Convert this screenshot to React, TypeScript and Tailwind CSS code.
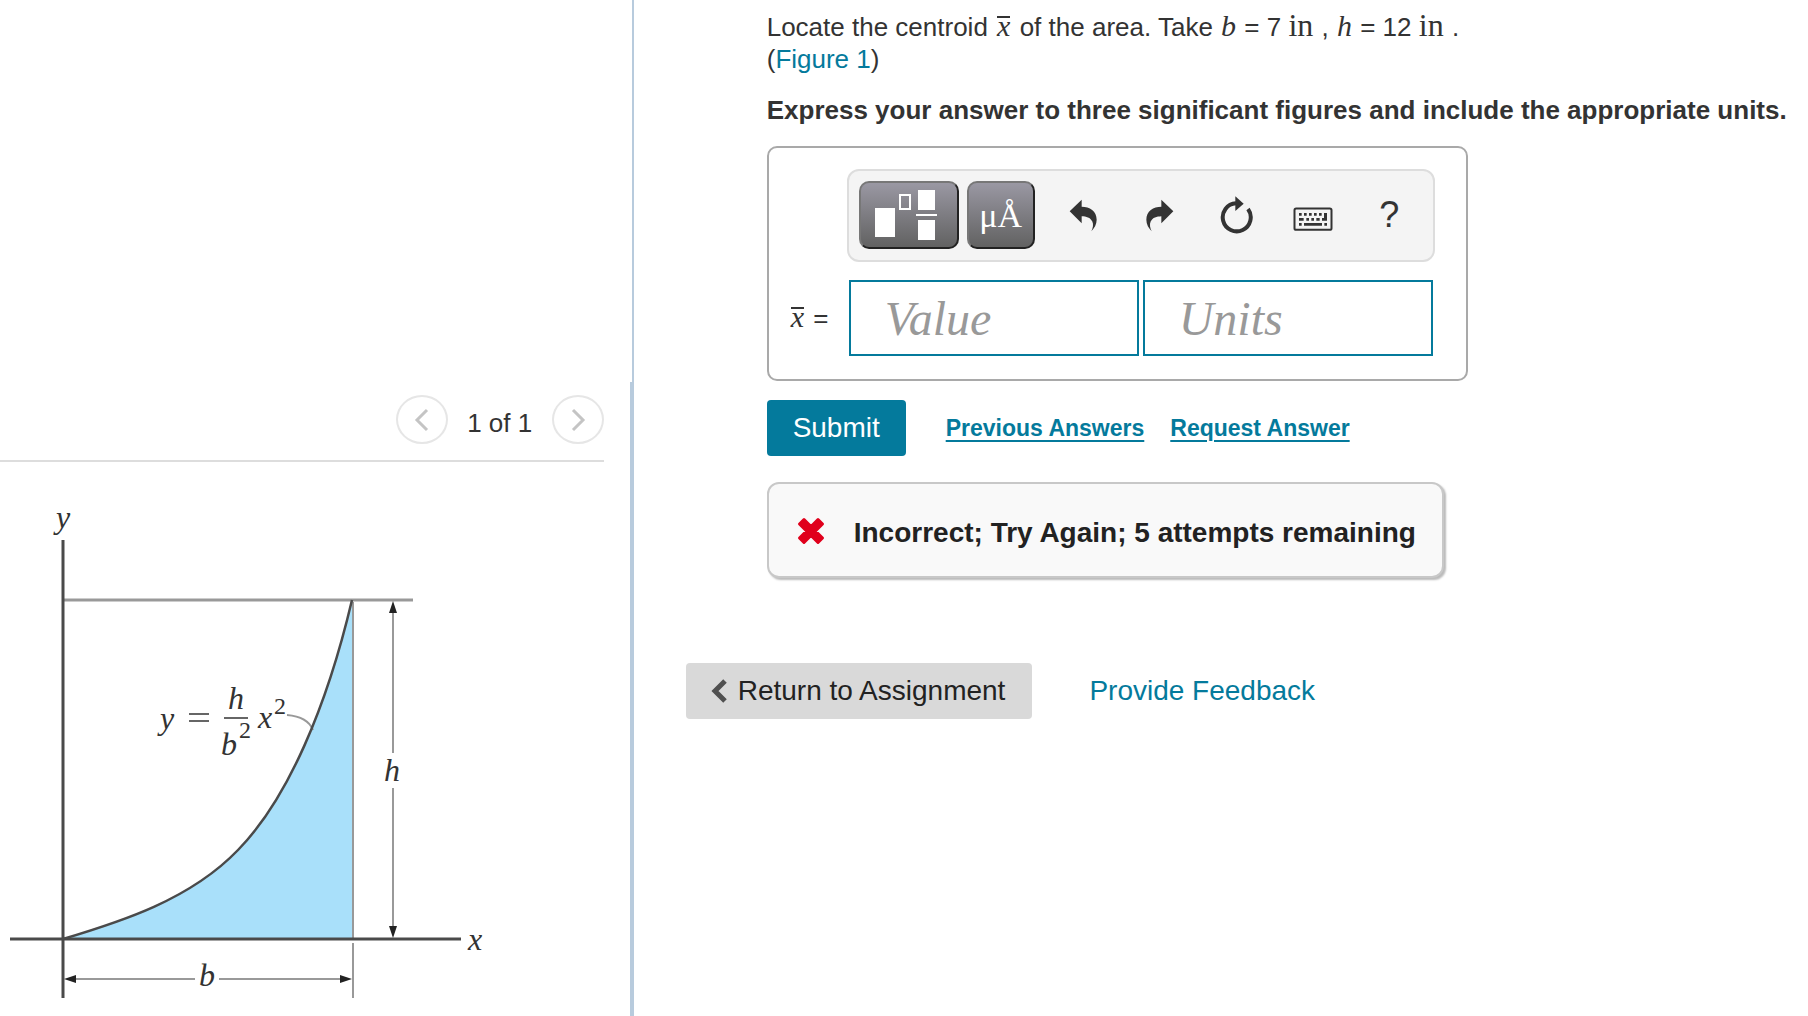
import { useState } from "react";
import type { ReactNode } from "react";

function MathVar({ children, bar }: { children: ReactNode; bar?: boolean }) {
  return (
    <i
      className={`font-['Liberation_Serif',serif] text-[30px] ${
        bar
          ? "mx-[2px] inline-block border-t-2 border-[#333] leading-4"
          : "mx-px leading-6"
      }`}
    >
      {children}
    </i>
  );
}

function Unit({ children }: { children: ReactNode }) {
  return (
    <span className="mr-px font-['Liberation_Serif',serif] text-[32px] leading-6">
      {children}
    </span>
  );
}

function TemplatesIcon() {
  return (
    <svg className="mr-[6px] h-[50px] w-[62px]" viewBox="0 0 62 50" fill="#fff">
      <rect x="0" y="18" width="20" height="29" />
      <path d="M25 5h10v14h-10z" fill="none" stroke="#fff" strokeWidth="2" />
      <rect x="43" y="0" width="17" height="20" />
      <rect x="41" y="24" width="21" height="2" />
      <rect x="43" y="30" width="17" height="20" />
    </svg>
  );
}

function UndoIcon({ className = "" }: { className?: string }) {
  return (
    <svg className={`h-[33px] w-7 ${className}`} viewBox="88 176 84 98" fill="#333">
      <path d="M90 212 126 178V199C150 199 171 212 171 238C171 252 164 264 155 272C160 262 162 252 158 243C152 230 140 228 126 227V248Z" />
    </svg>
  );
}

function ResetIcon() {
  return (
    <svg className="mr-[2px] h-[38px] w-[34px]" viewBox="540 168 102 114">
      <path
        d="M627 207A42 42 0 1 1 591 190"
        fill="none"
        stroke="#333"
        strokeWidth="12"
      />
      <path d="M589 169 614 191 589 213Z" fill="#333" />
    </svg>
  );
}

function KeyboardIcon() {
  return (
    <svg className="mr-[2px] h-6 w-10" viewBox="759 203 120 72">
      <rect x="763.500" y="207.500" width="111" height="64" rx="5" fill="none" stroke="#333" strokeWidth="6" />
      <path
        d="M777 221h8v8h-8zM792 221h8v8h-8zM807 221h8v8h-8zM822 221h8v8h-8zM837 221h8v8h-8zM852 221h9v23h-15v-8h6zM777 236h14v8h-14zM799 236h8v8h-8zM814 236h8v8h-8zM829 236h10v8h-10zM777 251h8v8h-8zM792 251h54v8h-54zM853 251h8v8h-8z"
        fill="#333"
      />
    </svg>
  );
}

function Chevron({ className = "" }: { className?: string }) {
  return (
    <svg className={`h-6 w-4 ${className}`} viewBox="0 0 16 24">
      <path d="M13 2 3 12l10 10" fill="none" stroke="currentColor" strokeWidth="3" />
    </svg>
  );
}

function Figure() {
  return (
    <svg
      className="block w-[500px] max-w-full"
      viewBox="0 490 500 520"
      role="img"
      aria-label="Area under y = (h/b²)x²"
    >
      <path
        d="M63 939C120 922 190 900 238 850C288 799 327 706 352 600V939Z"
        fill="#a9e0fa"
      />
      <g fill="none" stroke="#999" strokeWidth="3">
        <path d="M63 600H413" />
        <path d="M353 602V938M353 943V998" strokeWidth="2" />
        <path d="M393 606V753M393 788V932M70 979H195M219 979H346" strokeWidth="2" />
        <path d="M287 715C299 716 309 720 313 730" strokeWidth="2" />
      </g>
      <g fill="none" stroke="#4a4a4a" strokeWidth="3">
        <path d="M63 540V998M10 939H461" />
        <path d="M63 939C120 922 190 900 238 850C288 799 327 706 352 600" strokeWidth="2.500" />
      </g>
      <path
        d="M393 601l4 12h-8zM393 938l4-12h-8zM64 979l12-4v8zM352 979l-12-4v8z"
        fill="#222"
      />
      <g
        className="font-['Liberation_Serif',serif]"
        fontSize="32"
        fontStyle="italic"
        fill="#333"
      >
        <text x="56" y="528">y</text>
        <text x="384" y="781">h</text>
        <text x="199" y="986">b</text>
        <text x="468" y="950">x</text>
        <text x="160" y="729">y</text>
        <text x="228" y="709">h</text>
        <text x="221" y="755">b</text>
        <text x="258" y="728">x</text>
        <g fontStyle="normal" fontSize="24">
          <text x="239" y="738">2</text>
          <text x="274" y="714">2</text>
        </g>
      </g>
      <path d="M189 714h20M189 721h20M224 718h24" stroke="#666" strokeWidth="2" />
    </svg>
  );
}

const pagerButton =
  "flex h-[49px] w-[52px] items-center justify-center rounded-[50%] border-2 border-[#e6e6e6] text-[#c4c4c4]";
const paletteButton =
  "flex h-[68px] items-center justify-center rounded-[10px] border-2 border-t-[#777] border-l-[#777] border-r-[#222] border-b-[#222] bg-linear-to-b from-[#9a98a3] to-[#626262] text-white";
const toolButton = "flex h-[68px] w-[77px] items-center justify-center text-[#333]";
const answerInput =
  "h-[76px] w-[290px] border-2 border-[#047a9c] pl-[34px] font-['Liberation_Serif',serif] text-[48px] outline-none placeholder:italic placeholder:text-[#999]";

export default function App() {
  const [value, setValue] = useState("");
  const [units, setUnits] = useState("");

  return (
    <div className="flex min-h-screen bg-white font-['Liberation_Sans',Arial,sans-serif] text-[26px] text-[#333]">
      <aside className="flex w-[35.05%] shrink-0 flex-col">
        <div className="h-[382px] border-r-2 border-[#b8cbdd]" />
        <div className="flex-1 border-r-4 border-[#b8cbdd]">
          <div className="mr-[26px] flex items-start justify-end border-b-2 border-[#ddd] pt-[13px] pb-4">
            <button className={pagerButton} aria-label="Previous figure">
              <Chevron />
            </button>
            <span className="w-[104px] pt-3 text-center leading-8">1 of 1</span>
            <button className={pagerButton} aria-label="Next figure">
              <Chevron className="rotate-180" />
            </button>
          </div>
          <div className="pt-7">
            <Figure />
          </div>
        </div>
      </aside>

      <main className="min-w-0 flex-1 pt-[11px]">
        <div className="pl-[133px]">
          <p className="leading-8">
            Locate the centroid <MathVar bar>x</MathVar> of the area. Take{" "}
            <MathVar>b</MathVar> = 7 <Unit>in</Unit> , <MathVar>h</MathVar> = 12{" "}
            <Unit>in</Unit> .
            <br />
            (
            <a href="#figure" className="text-[#047a9c]">
              Figure 1
            </a>
            )
          </p>
          <p className="mt-[19px] leading-8 font-bold">
            Express your answer to three significant figures and include the
            appropriate units.
          </p>

          <form onSubmit={(e) => e.preventDefault()}>
            <div className="mt-5 w-fit rounded-[10px] border-2 border-[#a9a9a9] pt-[21px] pr-[31px] pb-[23px] pl-5">
              <div className="ml-[58px] flex items-center rounded-xl border-2 border-[#ddd] bg-[#f4f4f4] pt-[10px] pr-[3px] pb-[11px] pl-[10px]">
                <button type="button" className={`${paletteButton} w-[100px]`} aria-label="Templates">
                  <TemplatesIcon />
                </button>
                <button
                  type="button"
                  className={`${paletteButton} mr-[10px] ml-2 w-[68px] font-['Liberation_Serif',serif] text-[34px]`}
                >
                  μÅ
                </button>
                <button type="button" className={toolButton} aria-label="Undo">
                  <UndoIcon />
                </button>
                <button type="button" className={toolButton} aria-label="Redo">
                  <UndoIcon className="-scale-x-100" />
                </button>
                <button type="button" className={toolButton} aria-label="Reset">
                  <ResetIcon />
                </button>
                <button type="button" className={`${toolButton} pt-2`} aria-label="Keyboard shortcuts">
                  <KeyboardIcon />
                </button>
                <button type="button" className={`${toolButton} pr-1 text-[36px]`}>
                  ?
                </button>
              </div>
              <div className="mt-[18px] flex items-center gap-1">
                <label htmlFor="value" className="w-14">
                  <MathVar bar>x</MathVar> =
                </label>
                <input
                  id="value"
                  className={answerInput}
                  placeholder="Value"
                  value={value}
                  onChange={(e) => setValue(e.target.value)}
                />
                <input
                  aria-label="Units"
                  className={answerInput}
                  placeholder="Units"
                  value={units}
                  onChange={(e) => setUnits(e.target.value)}
                />
              </div>
            </div>

            <div className="mt-[19px] flex items-center text-[23px] font-bold text-[#047a9c]">
              <button className="h-14 w-[139px] rounded-[4px] bg-[#047a9c] text-[28px] font-normal text-white">
                Submit
              </button>
              <a href="#previous" className="ml-10 underline decoration-2 underline-offset-4">
                Previous Answers
              </a>
              <a href="#request" className="ml-[26px] underline decoration-2 underline-offset-4">
                Request Answer
              </a>
            </div>
          </form>

          <div className="mt-[26px] flex h-[96px] w-fit items-center rounded-xl border-2 border-[#c8c8c8] bg-[#f9f9f9] pt-[6px] pr-[26px] pl-7 shadow-[2px_2px_2px_#bbb]">
            <svg className="mr-[29px] mb-1 h-7 w-7" viewBox="0 0 28 28">
              <path
                d="M7 2.500 14 9.500 21 2.500 25.500 7 18.500 14 25.500 21 21 25.500 14 18.500 7 25.500 2.500 21 9.500 14 2.500 7Z"
                fill="#e0001c"
                stroke="#e0001c"
                strokeWidth="3"
                strokeLinejoin="round"
              />
            </svg>
            <strong className="text-[28px] text-[#222]">
              Incorrect; Try Again; 5 attempts remaining
            </strong>
          </div>
        </div>

        <div className="mt-[85px] flex items-center pl-[52px] text-[28px]">
          <a
            href="#assignment"
            className="flex h-14 items-center rounded-[4px] bg-[#d9d9d9] pr-[27px] pl-6 text-[#222]"
          >
            <svg className="mr-[10px] h-[26px] w-[18px]" viewBox="0 0 18 26">
              <path
                d="M15 3 5 13l10 10"
                fill="none"
                stroke="#505050"
                strokeWidth="5"
              />
            </svg>
            Return to Assignment
          </a>
          <a href="#feedback" className="ml-[57px] text-[#047a9c]">
            Provide Feedback
          </a>
        </div>
      </main>
    </div>
  );
}
